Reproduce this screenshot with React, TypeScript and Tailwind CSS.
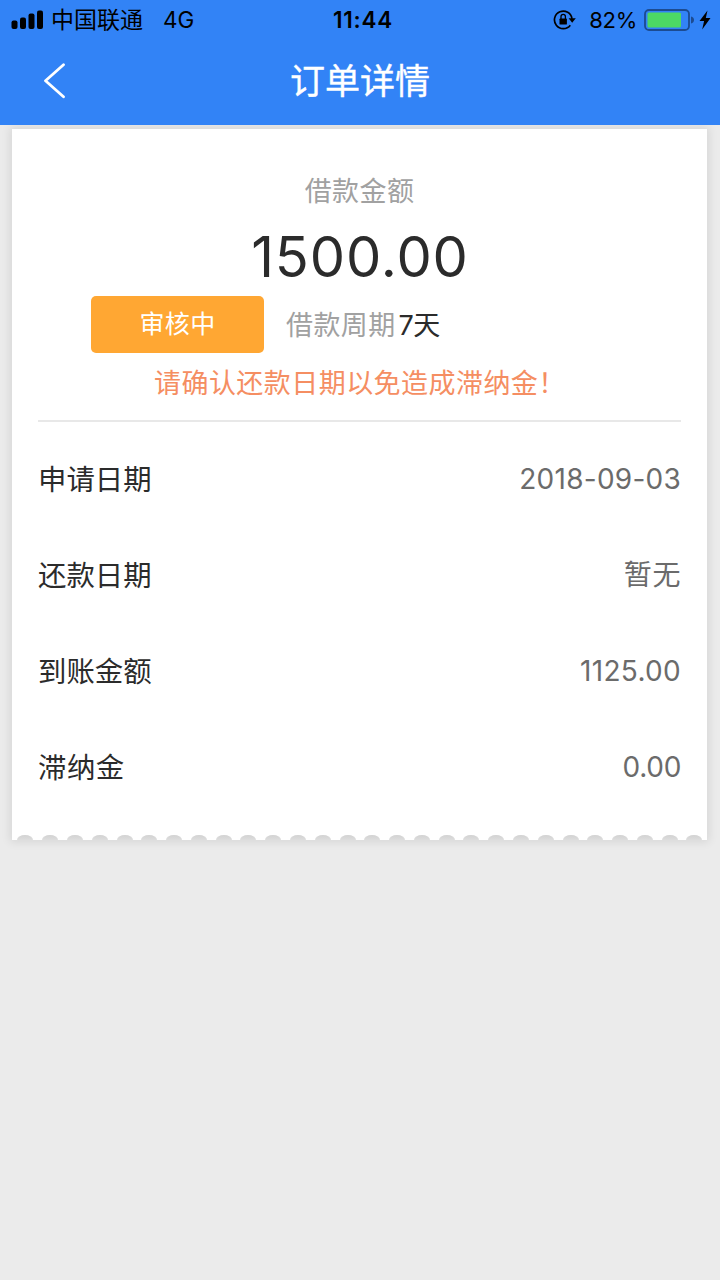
const details = [
  { label: '申请日期', value: '2018-09-03', labelSpacing: 'tracking-[0px]', spacing: 'tracking-[0.25px]' },
  { label: '还款日期', value: '暂无', labelSpacing: 'tracking-[0px]', spacing: 'tracking-[0.6px]' },
  { label: '到账金额', value: '1125.00', labelSpacing: 'tracking-[0px]', spacing: 'tracking-[0.3px]' },
  { label: '滞纳金', value: '0.00', labelSpacing: 'tracking-[0.5px]', spacing: 'tracking-[-0.3px]' },
];

function StatusBar() {
  return (
    <div className="flex h-10 items-center text-black">
      <div className="flex flex-1 items-center pl-[11px]">
        <svg width="33" height="20" viewBox="0 0 33 20" fill="currentColor">
          <rect x="0.5" y="10.5" width="6" height="8.5" rx="2" />
          <rect x="9" y="7.5" width="6" height="11.5" rx="2" />
          <rect x="17.5" y="3.5" width="6" height="15.5" rx="2" />
          <rect x="26" y="0.5" width="6" height="18.5" rx="2" />
        </svg>
        <span className="ml-[7px] pt-px text-[23px] leading-none">中国联通</span>
        <span className="ml-[20px] text-[22.5px] leading-none">4G</span>
      </div>
      <span className="pl-[4px] text-[22.5px] leading-none font-semibold tracking-[0.8px]">11:44</span>
      <div className="flex flex-1 items-center justify-end pr-[9px]">
        <svg width="23" height="22" viewBox="0 0 23 22" fill="none" stroke="currentColor" strokeWidth="1.7">
          <path d="M19 9.800A8.800 8.800 0 1 0 17.300 16.200" />
          <path d="M15.600 9.300h7.200l-3.600 4.500z" fill="currentColor" stroke="none" />
          <rect x="6.500" y="9.600" width="7.400" height="6" rx="0.700" fill="currentColor" stroke="none" />
          <path d="M8 10V7.500a2.200 2.200 0 0 1 4.400 0V10" strokeWidth="1.300" />
        </svg>
        <span className="ml-[13px] text-[22px] leading-none tracking-[-0.3px]">82%</span>
        <svg className="ml-[7px]" width="51" height="22" viewBox="0 0 51 22">
          <rect x="1" y="1" width="44" height="20" rx="4" fill="none" stroke="#1c4b91" strokeWidth="1.800" />
          <rect x="3.500" y="3.500" width="33.500" height="15" rx="1.500" fill="#4cd964" />
          <path d="M47 7.500q3 .8 3 3.500t-3 3.500z" fill="#1c4b91" />
        </svg>
        <svg className="ml-[4px]" width="12" height="20" viewBox="0 0 12 20" fill="currentColor">
          <path d="M8.500 0.500L0.500 11h4.600L3.200 19.500L11.500 8H6.800z" />
        </svg>
      </div>
    </div>
  );
}

export default function App() {
  return (
    <main className="flex h-[1280px] w-[720px] flex-col bg-[#ebebeb] font-['Inter','Noto_Sans_CJK_SC',sans-serif]">
      <header className="relative z-10 h-[125px] bg-[#3283f6]">
        <StatusBar />
        <div className="grid h-[82px] grid-cols-[1fr_auto_1fr] items-center text-white">
          <button aria-label="返回" className="ml-[43px] w-6">
            <svg width="24" height="36" viewBox="0 0 24 36" fill="none" stroke="currentColor" strokeWidth="2.800" strokeLinecap="round" strokeLinejoin="round">
              <path d="M20.500 1.800L2.500 17.800L20.500 33.800" />
            </svg>
          </button>
          <h1 className="pt-px text-[35px] leading-none font-normal [-webkit-text-stroke:0.4px_white]">订单详情</h1>
        </div>
      </header>

      <section className="mt-[4px] ml-[12px] flex h-[711px] w-[695px] flex-col bg-white shadow-[0_0_9px_2px_rgba(0,0,0,0.09)]">
        <div className="flex flex-col items-center pt-[47px]">
          <p className="text-[27px] leading-[32px] tracking-[0.4px] text-[#a1a1a1]">借款金额</p>
          <p className="mt-[13px] pl-px text-[56px] leading-[72px] tracking-[0.9px] text-[#2b2b2b]">1500.00</p>
        </div>
        <div className="mt-[3px] ml-[79px] flex h-[57px] items-center">
          <span className="flex h-[57px] w-[173px] items-center justify-center rounded-[5px] bg-[#ffa733] text-[25px] tracking-[0.4px] text-white">审核中</span>
          <span className="ml-[22px] pt-[2px] text-[27px] leading-none tracking-[0.4px] text-[#a1a1a1]">借款周期</span>
          <span className="ml-[3px] pt-[2px] text-[27px] leading-none tracking-[-0.6px] text-[#2b2b2b]">7天</span>
        </div>
        <p className="mt-[15px] ml-[142px] text-[27px] leading-[32px] tracking-[0.45px] text-[#f58e62]">请确认还款日期以免造成滞纳金！</p>
        <div className="mx-[26px] mt-[20px] h-[2px] bg-[#e8e8e8]" />
        <dl className="mx-[26px] mt-[10px]">
          {details.map((item) => (
            <div key={item.label} className="flex h-24 items-center justify-between">
              <dt className={`text-[28.4px] text-[#2b2b2b] ${item.labelSpacing}`}>{item.label}</dt>
              <dd className={`pb-[2px] text-[28px] text-[#6b6b6b] ${item.spacing}`}>{item.value}</dd>
            </div>
          ))}
        </dl>
        <div className="mt-auto flex h-[5px] pl-px" aria-hidden="true">
          {Array.from({ length: 28 }, (_, i) => (
            <span key={i} className="flex flex-1 justify-center">
              <span className="h-[5px] w-[16px] rounded-t-[50%_100%] bg-linear-to-b from-[#d2d2d2] to-[#dddddd]" />
            </span>
          ))}
        </div>
      </section>
    </main>
  );
}
